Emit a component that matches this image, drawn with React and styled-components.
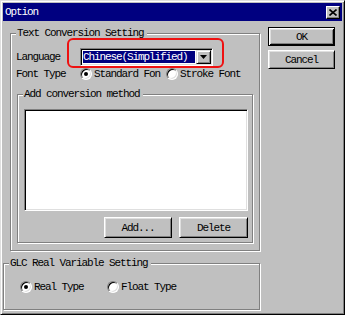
import styled, { createGlobalStyle } from "styled-components";

const GlobalStyle = createGlobalStyle`
  html, body {
    margin: 0;
    padding: 0;
    background: #c0c0c0;
  }
  * {
    box-sizing: border-box;
  }
  body {
    font-family: "Liberation Mono", "DejaVu Sans Mono", monospace;
    font-size: 11px;
    letter-spacing: -1.1px;
    color: #000;
  }
`;

function Radio({ label, checked, width }) {
  return (
    <Option $width={width}>
      <RadioDot $checked={checked} />
      <span>{label}</span>
    </Option>
  );
}

function App() {
  return (
    <>
      <GlobalStyle />
      <Window>
        <TitleBar>
          <Title>Option</Title>
          <CloseButton>
            <svg width="8" height="7" viewBox="0 0 8 7">
              <path d="M0.5 0.5 L7.5 6.5 M7.5 0.5 L0.5 6.5" stroke="#000" strokeWidth="1.6" />
            </svg>
          </CloseButton>
        </TitleBar>
        <Main>
          <LeftColumn>
            <Group $left={7} $width={250} $height={218} $padding="14px 0 0 5px">
              <Legend>Text Conversion Setting</Legend>
              <Row $height={18}>
                <Label>Language</Label>
                <ComboWrap>
                  <Combo>
                    <ComboValue>Chinese(Simplified)</ComboValue>
                    <DropButton>
                      <svg width="7" height="4" viewBox="0 0 7 4">
                        <path d="M0 0 H7 L3.5 4 Z" fill="#000" />
                      </svg>
                    </DropButton>
                  </Combo>
                  <Highlight />
                </ComboWrap>
              </Row>
              <Row $height={16}>
                <Label>Font Type</Label>
                <Radio label="Standard Fon" checked width={86} />
                <Radio label="Stroke Font" />
              </Row>
              <Group $left={1} $top={12} $width={236} $height={149} $padding="14px 0 0 6px">
                <Legend>Add conversion method</Legend>
                <ListBox />
                <ButtonRow>
                  <Button $width={68} $height={21}>Add...</Button>
                  <Button $width={69} $height={21}>Delete</Button>
                </ButtonRow>
              </Group>
            </Group>
            <Group $top={12} $width={257} $height={47} $padding="15px 0 0 16px">
              <Legend>GLC Real Variable Setting</Legend>
              <Row $height={16}>
                <Radio label="Real Type" checked width={87} />
                <Radio label="Float Type" />
              </Row>
            </Group>
          </LeftColumn>
          <RightColumn>
            <Button $width={67} $height={19} $default>OK</Button>
            <Button $width={67} $height={19}>Cancel</Button>
          </RightColumn>
        </Main>
      </Window>
    </>
  );
}

export default App;

const Window = styled.div`
  width: 345px;
  height: 315px;
  background: #c0c0c0;
  border: 1px solid;
  border-color: #dfdfdf #000 #000 #dfdfdf;
  box-shadow: inset 1px 1px 0 #fff, inset -1px -1px 0 #808080;
  padding: 2px;
  overflow: hidden;
`;

const TitleBar = styled.div`
  height: 18px;
  background: #000080;
  display: flex;
  align-items: center;
  justify-content: space-between;
  padding: 0 2px 0 2px;
`;

const Title = styled.span`
  color: #fff;
  font-size: 11px;
  line-height: 12px;
`;

const CloseButton = styled.div`
  width: 14px;
  height: 13px;
  background: #c0c0c0;
  display: flex;
  align-items: center;
  justify-content: center;
  border: 1px solid;
  border-color: #fff #000 #000 #fff;
  box-shadow: inset -1px -1px 0 #808080;
`;

const Main = styled.div`
  display: flex;
  align-items: flex-start;
`;

const LeftColumn = styled.div`
  display: flex;
  flex-direction: column;
  align-items: flex-start;
  margin-top: 12px;
`;

const RightColumn = styled.div`
  display: flex;
  flex-direction: column;
  gap: 4px;
  margin-top: 6px;
  margin-left: 8px;
`;

const Group = styled.div`
  position: relative;
  width: ${(p) => p.$width}px;
  height: ${(p) => p.$height}px;
  margin-left: ${(p) => p.$left || 0}px;
  margin-top: ${(p) => p.$top || 0}px;
  padding: ${(p) => p.$padding};
  border: 1px solid #808080;
  box-shadow: 1px 1px 0 #fff, inset 1px 1px 0 #fff;
  display: flex;
  flex-direction: column;
  align-items: flex-start;
`;

const Legend = styled.span`
  position: absolute;
  top: -7px;
  left: 5px;
  padding: 0 3px 0 1px;
  line-height: 12px;
  background: #c0c0c0;
  white-space: nowrap;
`;

const Row = styled.div`
  display: flex;
  align-items: center;
  height: ${(p) => p.$height}px;
  white-space: nowrap;
`;

const Label = styled.span`
  width: 64px;
  line-height: 12px;
`;

const ComboWrap = styled.div`
  position: relative;
`;

const Combo = styled.div`
  width: 133px;
  height: 18px;
  background: #fff;
  display: flex;
  align-items: stretch;
  border: 1px solid;
  border-color: #808080 #fff #fff #808080;
  box-shadow: inset 1px 1px 0 #000, inset -1px -1px 0 #dfdfdf;
  padding: 2px 2px 2px 2px;
`;

const ComboValue = styled.span`
  flex: 1;
  background: #000080;
  color: #fff;
  line-height: 12px;
  padding: 0 0 0 0;
  margin-right: 1px;
  display: flex;
  align-items: center;
`;

const DropButton = styled.div`
  width: 15px;
  margin: -1px -1px -1px 0;
  background: #c0c0c0;
  display: flex;
  align-items: center;
  justify-content: center;
  border: 1px solid;
  border-color: #dfdfdf #000 #000 #dfdfdf;
  box-shadow: inset 1px 1px 0 #fff, inset -1px -1px 0 #808080;
`;

const Highlight = styled.div`
  position: absolute;
  top: -10px;
  left: -13px;
  right: -11px;
  bottom: -2px;
  border: 2px solid #ee1111;
  border-radius: 6px;
  pointer-events: none;
`;

const Option = styled.label`
  display: flex;
  align-items: center;
  gap: 2px;
  width: ${(p) => (p.$width ? `${p.$width}px` : "auto")};
  line-height: 12px;
`;

const RadioDot = styled.span`
  width: 12px;
  height: 12px;
  flex: none;
  border-radius: 50%;
  background: #fff;
  border: 1px solid;
  border-color: #808080 #fff #fff #808080;
  box-shadow: inset 1px 1px 0 #000, inset -1px -1px 0 #dfdfdf;
  display: flex;
  align-items: center;
  justify-content: center;

  &::after {
    content: "";
    width: 4px;
    height: 4px;
    border-radius: 50%;
    background: #000;
    display: ${(p) => (p.$checked ? "block" : "none")};
  }
`;

const ListBox = styled.div`
  width: 224px;
  height: 102px;
  background: #fff;
  border: 1px solid;
  border-color: #808080 #fff #fff #808080;
  box-shadow: inset 1px 1px 0 #000, inset -1px -1px 0 #dfdfdf;
`;

const ButtonRow = styled.div`
  display: flex;
  justify-content: flex-end;
  gap: 7px;
  width: 224px;
  margin-top: 6px;
`;

const Button = styled.div`
  width: ${(p) => p.$width}px;
  height: ${(p) => p.$height}px;
  background: #c0c0c0;
  display: flex;
  align-items: center;
  justify-content: center;
  line-height: 12px;
  border: 1px solid;
  border-color: ${(p) => (p.$default ? "#000" : "#fff #000 #000 #fff")};
  box-shadow: ${(p) =>
    p.$default
      ? "inset 1px 1px 0 #fff, inset -1px -1px 0 #000, inset 2px 2px 0 #dfdfdf, inset -2px -2px 0 #808080"
      : "inset 1px 1px 0 #dfdfdf, inset -1px -1px 0 #808080"};
`;
